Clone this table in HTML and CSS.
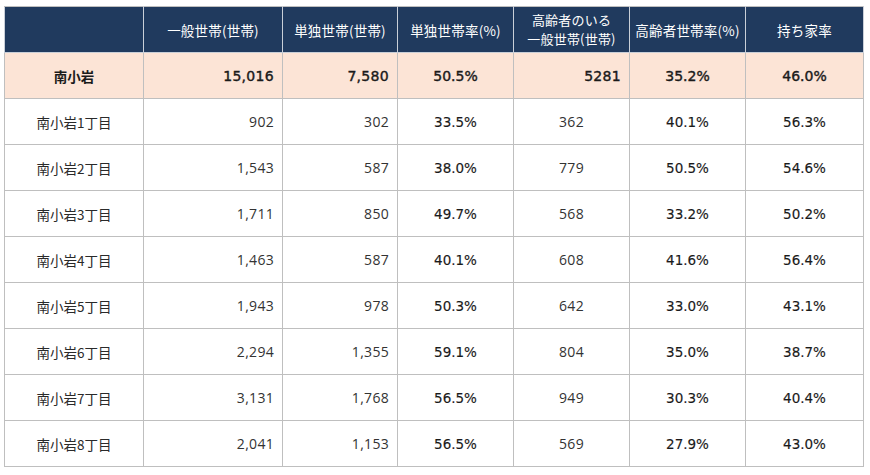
FILE: index.html
```html
<!DOCTYPE html>
<html lang="ja">
<head>
<meta charset="utf-8">
<link rel="stylesheet" href="styles.css">
</head>
<body>
<table class="data">
<colgroup>
<col class="c1"><col class="c2"><col class="c3"><col class="c4"><col class="c5"><col class="c6"><col class="c7">
</colgroup>
<thead>
<tr>
<th></th>
<th>一般世帯(世帯)</th>
<th>単独世帯(世帯)</th>
<th>単独世帯率(%)</th>
<th class="two"><span class="ln">高齢者のいる</span><span class="ln">一般世帯(世帯)</span></th>
<th>高齢者世帯率(%)</th>
<th>持ち家率</th>
</tr>
</thead>
<tbody>
<tr class="total">
<td class="name">南小岩</td><td class="num">15,016</td><td class="num">7,580</td><td class="pct">50.5%</td><td class="num">5281</td><td class="pct">35.2%</td><td class="pct">46.0%</td>
</tr>
<tr><td class="name">南小岩1丁目</td><td class="num">902</td><td class="num">302</td><td class="pct">33.5%</td><td class="mid">362</td><td class="pct">40.1%</td><td class="pct">56.3%</td></tr>
<tr><td class="name">南小岩2丁目</td><td class="num">1,543</td><td class="num">587</td><td class="pct">38.0%</td><td class="mid">779</td><td class="pct">50.5%</td><td class="pct">54.6%</td></tr>
<tr><td class="name">南小岩3丁目</td><td class="num">1,711</td><td class="num">850</td><td class="pct">49.7%</td><td class="mid">568</td><td class="pct">33.2%</td><td class="pct">50.2%</td></tr>
<tr><td class="name">南小岩4丁目</td><td class="num">1,463</td><td class="num">587</td><td class="pct">40.1%</td><td class="mid">608</td><td class="pct">41.6%</td><td class="pct">56.4%</td></tr>
<tr><td class="name">南小岩5丁目</td><td class="num">1,943</td><td class="num">978</td><td class="pct">50.3%</td><td class="mid">642</td><td class="pct">33.0%</td><td class="pct">43.1%</td></tr>
<tr><td class="name">南小岩6丁目</td><td class="num">2,294</td><td class="num">1,355</td><td class="pct">59.1%</td><td class="mid">804</td><td class="pct">35.0%</td><td class="pct">38.7%</td></tr>
<tr><td class="name">南小岩7丁目</td><td class="num">3,131</td><td class="num">1,768</td><td class="pct">56.5%</td><td class="mid">949</td><td class="pct">30.3%</td><td class="pct">40.4%</td></tr>
<tr><td class="name">南小岩8丁目</td><td class="num">2,041</td><td class="num">1,153</td><td class="pct">56.5%</td><td class="mid">569</td><td class="pct">27.9%</td><td class="pct">43.0%</td></tr>
</tbody>
</table>
</body>
</html>
```
FILE: styles.css
```css
html, body {
  margin: 0;
  padding: 0;
  background: #ffffff;
}
body {
  padding: 6px 0 0 4px;
  font-family: "Noto Sans CJK JP", "Noto Sans", sans-serif;
  color: #222;
}
.data {
  border-collapse: collapse;
  table-layout: fixed;
  width: 859px;
}
.c1 { width: 139px; }
.c2 { width: 139px; }
.c3 { width: 115px; }
.c4 { width: 116px; }
.c5 { width: 116px; }
.c6 { width: 116px; }
.c7 { width: 118px; }
.data th, .data td {
  border: 1px solid #bfbfbf;
  height: 46px;
  padding: 0 8px;
  box-sizing: border-box;
}
.data th {
  background: #203a5e;
  color: #ffffff;
  font-weight: 400;
  font-size: 13.5px;
  text-align: center;
  line-height: 18px;
  border-color: #c9cfd8;
  border-top-color: #bfbfbf;
  padding: 0 2px;
  letter-spacing: 0.2px;
}
.data th.two {
  font-size: 13px;
  line-height: 19px;
  padding: 0 2px 1px;
}
.data th.two .ln {
  display: block;
  height: 19px;
}
.data td.name {
  text-align: center;
  font-size: 13.5px;
  color: #2a2a2a;
}
.data td.num {
  text-align: right;
  font-family: "Open Sans", "Noto Sans", sans-serif;
  font-size: 14px;
  color: #333;
  letter-spacing: 0.3px;
}
.data td.mid {
  text-align: center;
  font-family: "Open Sans", "Noto Sans", sans-serif;
  font-size: 14px;
  color: #333;
  letter-spacing: 0.3px;
}
.data td.pct {
  text-align: center;
  font-family: "DejaVu Sans", sans-serif;
  font-size: 13.5px;
  color: #1a1a1a;
  -webkit-text-stroke: 0.15px #1a1a1a;
}
.total td {
  background: #fce4d6;
}
.total td.num, .total td.pct {
  font-family: "DejaVu Sans", sans-serif;
  font-weight: 400;
  -webkit-text-stroke: 0.4px #1a1a1a;
  color: #1a1a1a;
  font-size: 14px;
}
.total td.name {
  font-family: "Noto Sans CJK JP", sans-serif;
  font-weight: 700;
  font-size: 13.5px;
  color: #1a1a1a;
}
```
